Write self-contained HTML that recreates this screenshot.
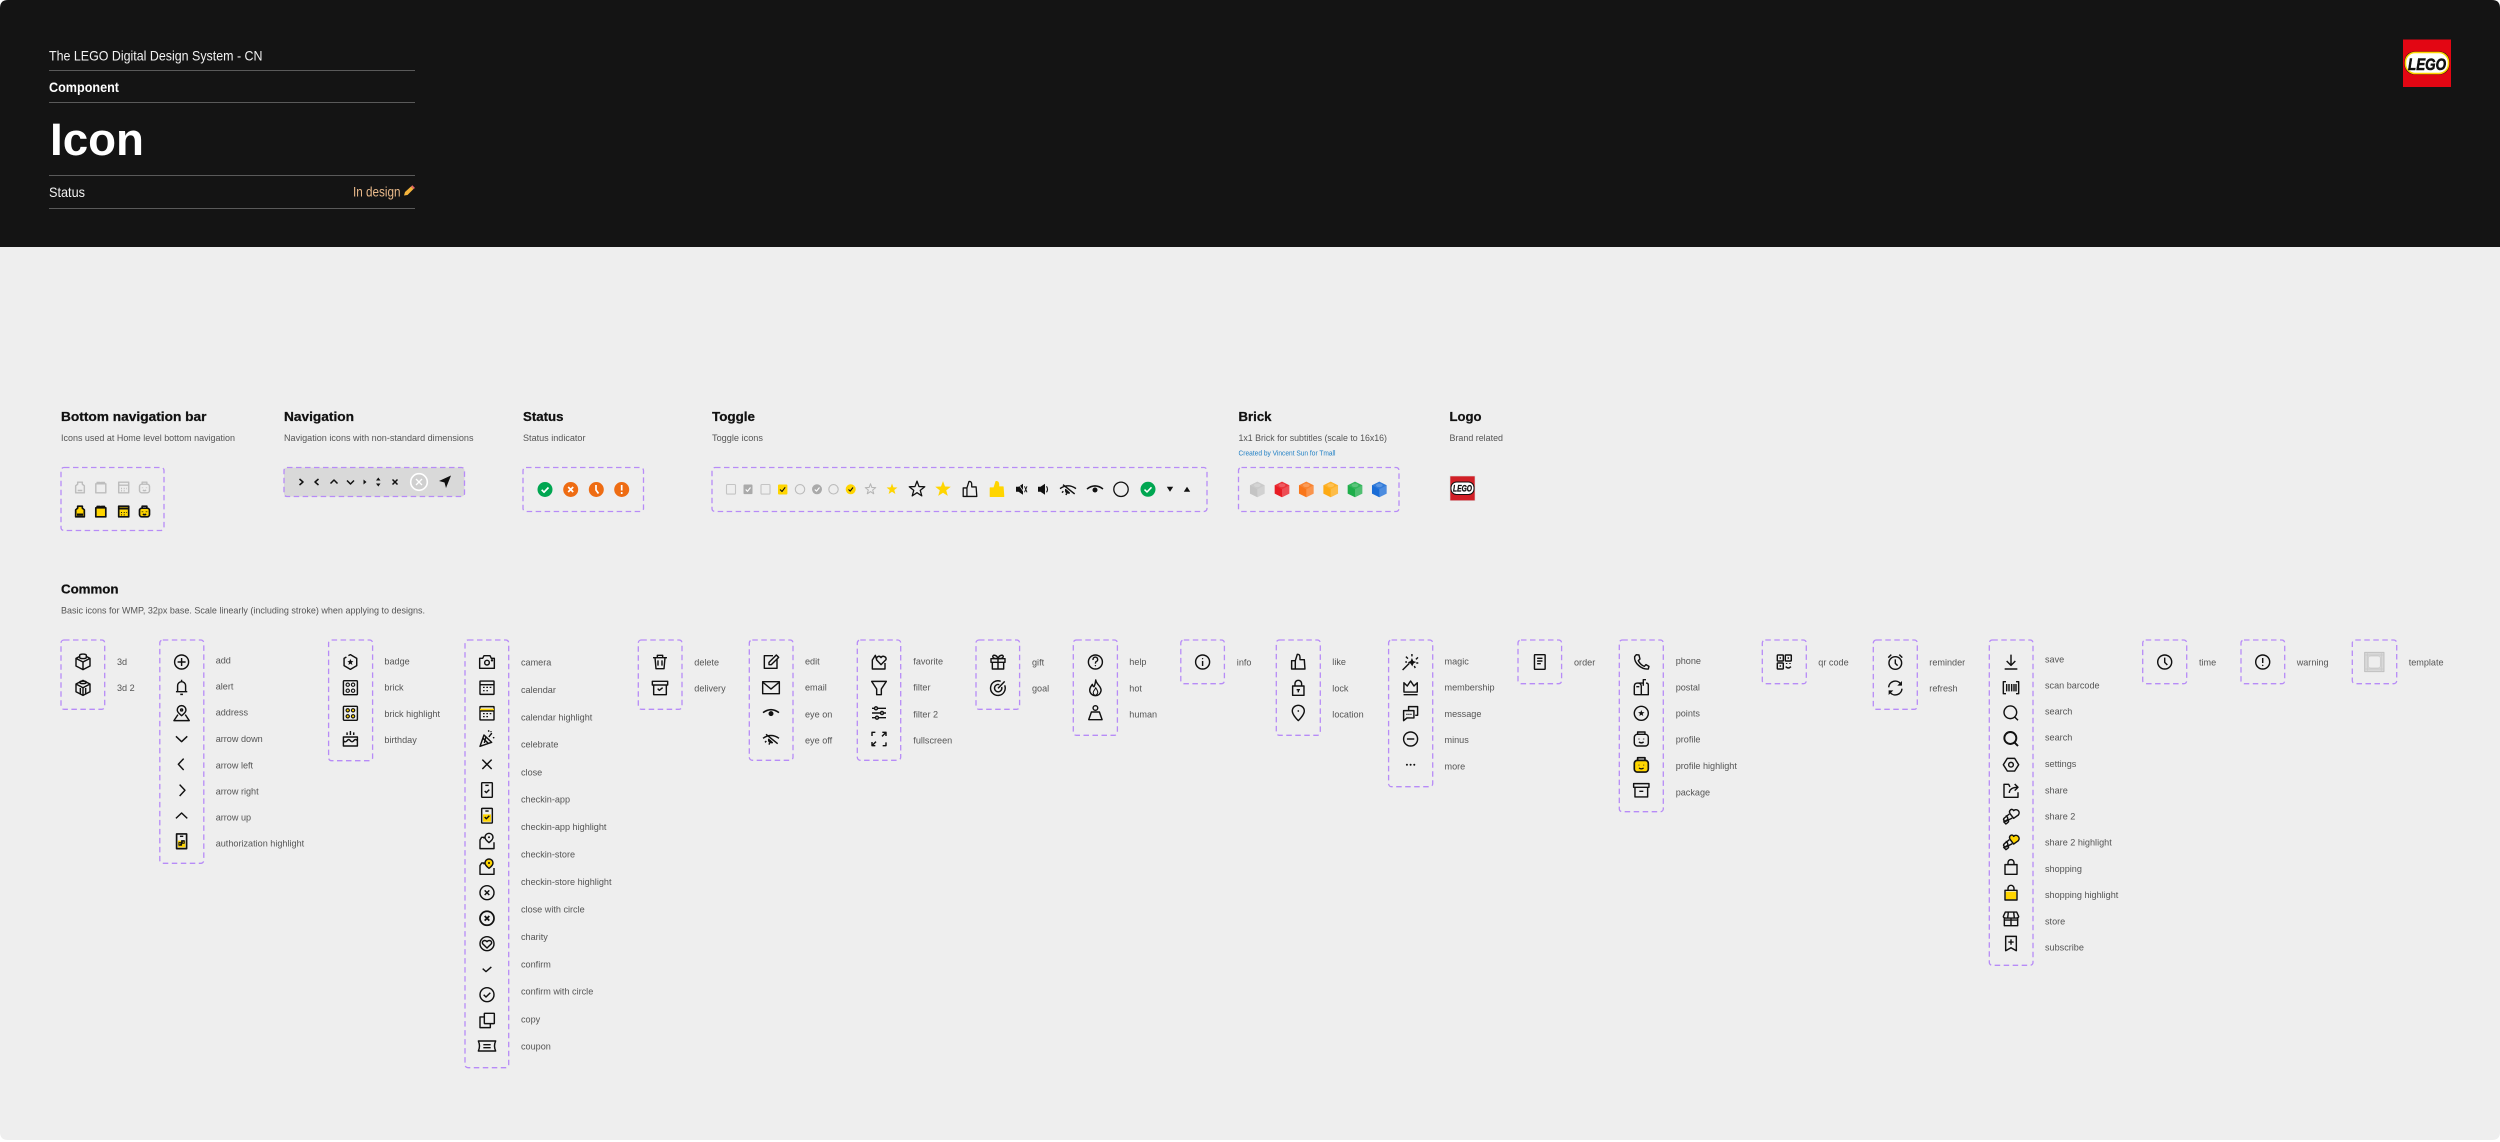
<!DOCTYPE html>
<html><head><meta charset="utf-8"><title>Icon</title>
<style>
html,body{margin:0;padding:0;background:#fff}
svg{display:block;filter:blur(.3px)}
text{font-family:"Liberation Sans","Noto Sans CJK SC",sans-serif}
.t{font-size:13px;font-weight:700;fill:#111;stroke:#111;stroke-width:.25}
.d{font-size:9px;fill:#555}
.l{font-size:9.1px;fill:#555}
.ic{fill:none;stroke:#111;stroke-width:4.3;stroke-linejoin:round}
.b{fill:none;stroke:#b78bf7;stroke-width:1.3;stroke-dasharray:5.5 3.5}
</style></head>
<body>
<svg xmlns="http://www.w3.org/2000/svg" width="2500" height="1142" viewBox="0 0 2500 1142">
<defs>
<polygon id="star" points="0,-24 5.9,-8.1 22.8,-7.4 9.5,3.1 14.1,19.4 0,10 -14.1,19.4 -9.5,3.1 -22.8,-7.4 -5.9,-8.1"/>
<path id="th" d="M-20-4H-9V21H-20ZM-9-4L-3-23Q5-24 5-14V-7H18L20 21H-9"/>
<g id="cube" transform="scale(.3333)"><path d="M0-22L21-11V12L0 23L-21 12V-11ZM-21-11L0 0L21-11M0 0V23"/><path d="M-10-14V-20C-10-25 10-25 10-20V-14C10-9-10-9-10-14Z" fill="#eee"/></g>
<g id="cube2" transform="scale(.3333)"><path d="M0-22L21-11V12L0 23L-21 12V-11ZM-21-11L0 0L21-11M0 0V23M-8 1V20M8 1V20"/><path d="M-10-16C-10-21 10-21 10-16C10-11-10-11-10-16Z"/></g>
<g id="add" transform="scale(.3333)"><circle r="21"/><path d="M0-12V12M-12 0H12"/></g>
<g id="alert" transform="scale(.3333)"><path d="M-12 12V-6A12 12 0 0 1 12-6V12ZM-17 12H17M0-18V-24M-4 20H4"/></g>
<g id="addr" transform="scale(.3333)"><path d="M0-23A13 13 0 0 1 13-10C13-2 0 7 0 7S-13-2-13-10A13 13 0 0 1 0-23Z"/><circle cy="-10" r="3"/><path d="M-11 4L-23 22H23L11 4"/></g>
<g id="dn" transform="scale(.3333)"><path d="M-17-8L0 8L17-8"/></g>
<g id="lf" transform="scale(.3333)"><path d="M8-17L-8 0L8 17"/></g>
<g id="rt" transform="scale(.3333)"><path d="M-8-17L8 0L-8 17"/></g>
<g id="up" transform="scale(.3333)"><path d="M-17 8L0-8L17 8"/></g>
<g id="auth" transform="scale(.3333)"><path d="M-15-22H15V22H-15Z" stroke-width="5"/><path d="M-11-2H11V18H-11Z" fill="#ffd500" stroke="none"/><path d="M-5-15H5"/><path d="M-6 12L6-2M-8 4H0V12H-8ZM0-2H8V6H0Z" stroke-width="3"/></g>
<g id="badge" transform="scale(.3333)"><path d="M-6-19L0-22L19-11V11L0 22L-19 11V-11L-12-15"/><path d="M0-9L3-3L9-2L4 2L6 9L0 5L-6 9L-4 2L-9-2L-3-3Z" fill="#111" stroke="none"/></g>
<g id="brick" transform="scale(.3333)"><rect x="-21" y="-21" width="42" height="42" rx="3"/><g stroke-width="3.4"><circle cx="-8" cy="-9" r="5"/><circle cx="8" cy="-9" r="5"/><circle cx="-8" cy="9" r="5"/><circle cx="8" cy="9" r="5"/></g></g>
<g id="brickh" transform="scale(.3333)"><rect x="-21" y="-21" width="42" height="42" rx="3"/><g stroke-width="3.4" fill="#ffd500"><circle cx="-8" cy="-9" r="5"/><circle cx="8" cy="-9" r="5"/><circle cx="-8" cy="9" r="5"/><circle cx="8" cy="9" r="5"/></g></g>
<g id="bday" transform="scale(.3333)"><path d="M-21-6H21V21H-21ZM-21 5Q-15 12-10 5T0 5T10 5T21 5M0-24V-12M-10-20V-12M10-20V-12"/></g>
<g id="cam" transform="scale(.3333)"><path d="M-22-11H-13L-9-19H9L13-11H22V19H-22Z"/><circle cy="2" r="7"/><circle cx="15" cy="-5" r="1.5" fill="#111"/></g>
<g id="cal" transform="scale(.3333)"><rect x="-21" y="-20" width="42" height="40" rx="1"/><path d="M-21-9H21"/><path d="M-12-1H-7M-2-1H3M8-1H13M-12 9H-7M-2 9H3" stroke-width="3.5"/></g>
<g id="calh" transform="scale(.3333)"><rect x="-21" y="-20" width="42" height="40" rx="1"/><path d="M-21-14H21V-8H-21Z" fill="#ffd500" stroke="none"/><path d="M-21-7H21"/><path d="M-12 1H-7M-2 1H3M8 1H13M-12 10H-7M-2 10H3" stroke-width="3.5"/></g>
<g id="cele" transform="scale(.3333)"><path d="M-21 22L-9-12L14 10ZM-12-2L5 14M-3-8L-8 12"/><path d="M6-6C8-12 12-12 14-18"/><circle cx="5" cy="-24" r="2.5" fill="#111" stroke="none"/><circle cx="20" cy="-4" r="2.5" fill="#111" stroke="none"/><circle cx="12" cy="-22" r="2" fill="#111" stroke="none"/></g>
<g id="x" transform="scale(.3333)"><path d="M-14-14L14 14M14-14L-14 14"/></g>
<g id="capp" transform="scale(.3333)"><rect x="-16" y="-22" width="32" height="44" rx="2"/><path d="M-5-14H5"/><path d="M-7 3L-2 8L7-1"/></g>
<g id="capph" transform="scale(.3333)"><path d="M-12-4H12V18H-12Z" fill="#ffd500" stroke="none"/><rect x="-16" y="-22" width="32" height="44" rx="2"/><path d="M-5-14H5"/><path d="M-7 4L-2 9L7 0"/></g>
<g id="cst" transform="scale(.3333)"><path d="M-9-8V-12H-16L-21-4V22H21V3"/><path d="M6-24A12 12 0 0 1 18-12C18-5 6 4 6 4S-6-5-6-12A12 12 0 0 1 6-24Z" fill="#eee"/><circle cx="6" cy="-12" r="3" fill="#111" stroke="none"/></g>
<g id="csth" transform="scale(.3333)"><path d="M-9-8V-12H-16L-21-4V22H21V3"/><path d="M6-24A12 12 0 0 1 18-12C18-5 6 4 6 4S-6-5-6-12A12 12 0 0 1 6-24Z" fill="#ffd500"/><circle cx="6" cy="-12" r="3" fill="#111" stroke="none"/></g>
<g id="xc" transform="scale(.3333)"><circle r="21"/><path d="M-7-7L7 7M7-7L-7 7"/></g>
<g id="xc2" transform="scale(.3333)" stroke-width="5.2"><circle r="21"/><path d="M-7-7L7 7M7-7L-7 7"/></g>
<g id="char" transform="scale(.3333)"><circle r="21"/><path d="M0 13L-13 0C-17-8-6-13 0-6C6-13 17-8 13 0Z"/></g>
<g id="ok" transform="scale(.3333)"><path d="M-13-2L-3 7L13-7"/></g>
<g id="okc" transform="scale(.3333)"><circle r="21"/><path d="M-10 0L-3 7L10-6"/></g>
<g id="copy" transform="scale(.3333)"><rect x="-8" y="-21" width="30" height="31" rx="1"/><path d="M-8-10H-21V22H10V10"/></g>
<g id="coup" transform="scale(.3333)"><path d="M-26-15H26Q19 0 26 15H-26Q-19 0-26-15ZM-11-4H11M-11 5H11"/></g>
<g id="del" transform="scale(.3333)"><path d="M-21-13H21M-8-13V-20H8V-13M-15-13L-12 20H12L15-13M-6-5V11M6-5V11"/></g>
<g id="deliv" transform="scale(.3333)"><rect x="-23" y="-20" width="46" height="11"/><path d="M-19-9V20H19V-9M-7 2L-2 7L8-1"/></g>
<g id="edit" transform="scale(.3333)"><path d="M6-19H-20V19H18V-8"/><path d="M-6 8V1L16-21L23-14L1 8Z"/></g>
<g id="mail" transform="scale(.3333)"><rect x="-25" y="-18" width="50" height="36"/><path d="M-24-16L0 4L24-16"/></g>
<g id="eye" transform="scale(.3333)"><path d="M-24-1Q0-19 24-1" stroke-width="4.6"/><circle cy="2" r="7.500" fill="#111" stroke="none"/></g>
<g id="eyeo" transform="scale(.3333)"><path d="M-24-2Q0-19 24-2M-15-14L20 14" stroke-width="4.3"/><path d="M-7 1L4 11Q-8 12-7 1Z" fill="#111"/><path d="M-14 6L-18 10M-4 12L-6 17"/></g>
<g id="fav" transform="scale(.3333)"><path d="M-8-10L-11-20L-20-6V21H18V3"/><path d="M6 8L-7-6C-10-16 1-21 6-13C11-21 23-16 21-7Z" fill="#eee"/></g>
<g id="filt" transform="scale(.3333)"><path d="M-22-19H22L7 4V21H-7V4Z"/></g>
<g id="filt2" transform="scale(.3333)"><path d="M-21-14H21M-21 0H21M-21 14H21"/><circle cx="-9" cy="-14" r="4.500" fill="#eee"/><circle cx="9" cy="0" r="4.500" fill="#eee"/><circle cx="-6" cy="14" r="4.500" fill="#eee"/></g>
<g id="fs" transform="scale(.3333)"><path d="M-21-9V-20H-11M10-20H21V-9M21-20L9-8M-21 9V20H-11M-21 20L-9 8M21 10V20H11"/></g>
<g id="gift" transform="scale(.3333)"><path d="M-21-10H21V1H-21ZM-17 1V21H17V1ZM0-10V21"/><path d="M0-10C-4-23-19-23-15-14C-13-10-5-10 0-10C5-10 13-10 15-14C19-23 4-23 0-10Z"/></g>
<g id="goal" transform="scale(.3333)"><path d="M8-20A22 22 0 1 0 20-8M4-10A11 11 0 1 0 11-3M0 1L20-20"/></g>
<g id="help" transform="scale(.3333)"><circle r="21"/><path d="M-7-6A7 7 0 1 1 2-1Q0 1 0 5"/><circle cy="11" r="2" fill="#111" stroke="none"/></g>
<g id="hot" transform="scale(.3333)"><path d="M1-24C3-10 18-6 17 8C15 19 7 23 0 23C-8 23-17 17-17 6C-17-2-13-5-9-11C-8-6-6-4-4-4C-1-10 0-16 1-24Z"/><path d="M0 22C-6 21-8 14-5 9C-3 6 0 3 1-1C3 4 8 8 7 14C6 18 3 21 0 22" stroke-width="3"/></g>
<g id="hum" transform="scale(.3333)"><circle cy="-15" r="7"/><path d="M-12-3H12L20 20H-20Z"/></g>
<g id="info" transform="scale(.3333)"><circle r="21"/><path d="M0-3V12"/><circle cy="-10" r="2" fill="#111" stroke="none"/></g>
<g id="like" transform="scale(.3333)"><use href="#th"/></g>
<g id="lock" transform="scale(.3333)"><rect x="-17" y="-6" width="34" height="28"/><path d="M-10-6V-13A10 10 0 0 1 10-13V-6M-5 5H5M0 5V13"/></g>
<g id="loc" transform="scale(.3333)"><path d="M0-23C10-23 18-16 18-6C18 6 0 23 0 23S-18 6-18-6C-18-16-10-23 0-23Z"/><circle cy="-6" r="2.600" fill="#111" stroke="none"/></g>
<g id="magic" transform="scale(.3333)"><path d="M-24 24L-4 4"/><path d="M4-12L8-3L17 0L9 4L5 13L0 5L-9 1L0-3Z" fill="#111" stroke="none"/><path d="M4-24V-17M-14-16L-8-10M22-14L16-8M23 3H17M-16 0H-11M14 18L11 12"/></g>
<g id="crown" transform="scale(.3333)"><path d="M-20-15L-10-5L0-20L10-5L20-15V13H-20ZM-21 21H21"/></g>
<g id="msg" transform="scale(.3333)"><path d="M-6-9V-20H21V6H14"/><path d="M-21-8H10V14H-11L-21 22Z"/><path d="M-13 3H-9M-7 3H-3M-1 3H3" stroke-width="3.5"/></g>
<g id="minus" transform="scale(.3333)"><circle r="21"/><path d="M-11 0H11"/></g>
<g id="more" transform="scale(.3333)"><circle cx="-11" r="3" fill="#111" stroke="none"/><circle r="3" fill="#111" stroke="none"/><circle cx="11" r="3" fill="#111" stroke="none"/></g>
<g id="order" transform="scale(.3333)"><rect x="-16" y="-22" width="32" height="44" rx="1.500"/><path d="M-8-11H8M-8-3H8M-8 5H3"/></g>
<g id="phone" transform="scale(.3333)"><path d="M-15-22L-7-21L-4-9L-9-4C-5 4 1 10 9 13L14 8L23 13L21 21C0 23-22 3-20-16Z"/></g>
<g id="post" transform="scale(.3333)"><path d="M-21 21V-4Q-21-14-11-14H6M-21 21H21V-8Q21-14 14-14M0 21V-4Q0-14-11-14M-15-3H-6M6-6V-24H14"/></g>
<g id="pts" transform="scale(.3333)"><circle r="21"/><g transform="scale(.42)"><use href="#star" fill="#111" stroke="none"/></g></g>
<g id="prof" transform="scale(.3333)"><rect x="-21" y="-14" width="42" height="35" rx="9"/><path d="M-11-14V-21H11V-14"/><path d="M-7-1V1M7-1V1M-7 9Q0 14 7 9"/></g>
<g id="profh" transform="scale(.3333)" stroke-width="5"><rect x="-21" y="-13" width="42" height="35" rx="9" fill="#ffd500"/><path d="M-11-13V-21H11V-13"/><path d="M-7 0V2M7 0V2M-7 10Q0 15 7 10" stroke-width="3.500"/></g>
<g id="pack" transform="scale(.3333)"><rect x="-23" y="-20" width="46" height="11"/><path d="M-19-9V20H19V-9M-6 3H6"/></g>
<g id="qr" transform="scale(.3333)"><rect x="-21" y="-21" width="18" height="18" rx="2"/><rect x="3" y="-21" width="18" height="18" rx="2"/><rect x="-21" y="3" width="18" height="18" rx="2"/><path d="M-12-12H-12.1M12-12H11.9M-12 12H-12.1" stroke-width="5" stroke-linecap="round"/><path d="M7 3V6M17 3V6M4 14Q12 22 20 14"/></g>
<g id="remind" transform="scale(.3333)"><circle cy="3" r="19"/><path d="M0-8V4L7 11M-21-13L-12-22M21-13L12-22"/></g>
<g id="ref" transform="scale(.3333)"><path d="M-20-2A20 20 0 0 1 15-14M20 2A20 20 0 0 1-15 14"/><path d="M20-21V-7H6ZM-20 21V7H-6Z" fill="#111" stroke="none"/></g>
<g id="save" transform="scale(.3333)"><path d="M0-22V10M-13-3L0 10L13-3M-19 21H19"/></g>
<g id="scan" transform="scale(.3333)"><path d="M-15-18H-23V18H-15M15-18H23V18H15M-13-11V11M-6-11V11M2-11V11M9-11V11M15-11V11"/></g>
<g id="srch" transform="scale(.3333)"><circle cx="-2" cy="-3" r="19"/><path d="M11 11L21 21"/></g>
<g id="srch2" transform="scale(.3333)" stroke-width="5.800"><circle cx="-2" cy="-3" r="18"/><path d="M11 11L21 21"/></g>
<g id="set" transform="scale(.3333)"><path d="M-23 0L-11-19H11L23 0L11 19H-11Z"/><circle r="7"/></g>
<g id="share" transform="scale(.3333)"><path d="M-21 0V21H21V6M-21 0V-18H-7L-3-10M-5 8C-5-3 5-9 19-9M11-19L21-9L11 1"/></g>
<g id="sh2" transform="scale(.3333)"><path d="M8 7L-3-7C-8-17 3-25 8-16C16-24 30-14 22-3Z"/><path d="M-5-6L-20 6C-26 12-18 18-14 15L4 6M-16-1C-12 0-8 6-10 11L-22 18M-10 11C-7 13-6 17-9 19L-15 24M-23 16L-14 25"/></g>
<g id="sh2h" transform="scale(.3333)"><path d="M8 7L-3-7C-8-17 3-25 8-16C16-24 30-14 22-3Z" fill="#ffd500"/><path d="M-5-6L-20 6C-26 12-18 18-14 15L4 6M-16-1C-12 0-8 6-10 11L-22 18M-10 11C-7 13-6 17-9 19L-15 24M-23 16L-14 25"/></g>
<g id="shop" transform="scale(.3333)"><path d="M-18-8H18V21H-18ZM-9-8V-14A9 9 0 0 1 9-14V-8"/></g>
<g id="shoph" transform="scale(.3333)"><path d="M-16-4H16V19H-16Z" fill="#ffd500" stroke="none"/><path d="M-18-8H18V21H-18ZM-9-8V-14A9 9 0 0 1 9-14V-8"/></g>
<g id="store" transform="scale(.3333)"><path d="M-17-20H17L23-7Q23-2 15-2H-15Q-23-2-23-7ZM-20-2V21H20V-2M0-2V21M-8-20L-10-2M8-20L10-2M-20 4H20"/></g>
<g id="sub" transform="scale(.3333)"><path d="M-16-22H16V21L0 12L-16 21ZM0-13V3M-8-5H8"/></g>
<g id="time" transform="scale(.3333)"><circle r="21"/><path d="M0-13V1L8 9"/></g>
<g id="warn" transform="scale(.3333)"><circle r="21"/><path d="M0-12V3"/><circle cy="10" r="2.300" fill="#111" stroke="none"/></g>
<g id="tpl" transform="scale(.3333)"><rect x="-29" y="-29" width="58" height="58" fill="#d8d8d8" stroke="#c0c0c0" stroke-width="3"/><path d="M-29-21H29M-29 21H29M-21-29V29M21-29V29" stroke="#c8c8c8" stroke-width="2"/><rect x="-18" y="-18" width="36" height="36" rx="7" fill="#eee" stroke="#c8c8c8" stroke-width="2"/></g>
<g id="br" transform="scale(.3333)"><path d="M0-23L22-12V13L0 24L-22 13V-12Z" fill="currentColor" stroke="none"/><path d="M0 0L22-12V13L0 24Z" fill="#fff" fill-opacity=".22" stroke="none"/><path d="M0 0L-22-12L0-23L22-12Z" fill="#fff" fill-opacity=".1" stroke="none"/><ellipse cy="-12" rx="10" ry="5.500" fill="#fff" fill-opacity=".2" stroke="none"/></g>
<g id="n1" transform="scale(.3333)"><path d="M-13 16V-5L-7-10V-16H7V-10L13-5V16ZM-7 9H7"/></g>
<g id="n2" transform="scale(.3333)"><path d="M-15-11H15V16H-15ZM-11-11V-15H-2V-11M2-11V-15H11V-11"/></g>
<g id="n3" transform="scale(.3333)"><path d="M-15-16H15V16H-15ZM-15-7H15M-8 3H-5M0 3H3M8 3H10M-8 10H-5M0 10H3"/></g>
<g id="n4" transform="scale(.3333)"><rect x="-15" y="-10" width="30" height="26" rx="7"/><path d="M-7-10V-16H7V-10M-6 0V2M6 0V2M-5 8Q0 11 5 8"/></g>
<g id="m1" transform="scale(.3333)" stroke-width="5"><path d="M-13 16V-5L-7-10V-16H7V-10L13-5V16Z" fill="#ffd500"/><path d="M-9 6H9V13H-9Z" fill="#111" stroke="none"/></g>
<g id="m2" transform="scale(.3333)" stroke-width="5"><path d="M-15-11H15V16H-15Z" fill="#ffd500"/><path d="M-11-11V-15H-2V-11M2-11V-15H11V-11"/></g>
<g id="m3" transform="scale(.3333)" stroke-width="5"><path d="M-15-16H15V16H-15Z" fill="#ffd500"/><path d="M-15-12H15V-6H-15Z" fill="#111" stroke="none"/><path d="M-8 3H-5M0 3H3M8 3H10M-8 10H-5M0 10H3" stroke-width="3"/></g>
<g id="m4" transform="scale(.3333)" stroke-width="5"><rect x="-15" y="-10" width="30" height="26" rx="7" fill="#ffd500"/><path d="M-7-10V-16H7V-10M-6 0V2M6 0V2M-5 8Q0 11 5 8"/></g>
</defs>

<rect width="2500" height="1142" fill="#fff"/>
<path d="M0 8Q0 0 8 0H2492Q2500 0 2500 8V1132Q2500 1140 2492 1140H8Q0 1140 0 1132Z" fill="#eee"/>
<path d="M0 247V8Q0 0 8 0H2492Q2500 0 2500 8V247Z" fill="#141414"/>

<!-- header -->
<path d="M49 70.500H415M49 102.500H415M49 175.500H415M49 208.500H415" stroke="#5a5a5a" stroke-width="1" fill="none"/>
<text x="49" y="60.500" font-size="14" fill="#f2f2f2" textLength="213.500" lengthAdjust="spacingAndGlyphs">The LEGO Digital Design System - CN</text>
<text x="49" y="92" font-size="13.500" font-weight="700" fill="#fff" textLength="70" lengthAdjust="spacingAndGlyphs">Component</text>
<text x="50" y="155" font-size="45" font-weight="700" fill="#fff" textLength="94" lengthAdjust="spacingAndGlyphs">Icon</text>
<text x="49" y="197" font-size="14" fill="#f2f2f2" textLength="36" lengthAdjust="spacingAndGlyphs">Status</text>
<text x="353" y="196.500" font-size="14" fill="#e8b98a" textLength="47.500" lengthAdjust="spacingAndGlyphs">In design</text>
<path d="M405 192L411 186.500L413.500 189L407.500 195L404 195.500Z" fill="#f4b43c"/><path d="M411 186.500L412.300 185.300L415 188L413.500 189Z" fill="#e86a6a"/>

<!-- logo -->
<rect x="2403" y="39.500" width="48" height="47.500" fill="#e30613"/>
<rect x="2404.500" y="51.500" width="45" height="23" rx="10" fill="#111"/>
<rect x="2405.500" y="52.500" width="43" height="21" rx="9.500" fill="#fff" stroke="#ffd500" stroke-width="1.500"/>
<text x="2408" y="70" font-size="17" font-weight="700" font-style="italic" fill="#111" stroke="#111" stroke-width=".6" textLength="38" lengthAdjust="spacingAndGlyphs">LEGO</text>

<!-- section titles -->
<text class="t" x="61" y="421" textLength="145.500" lengthAdjust="spacingAndGlyphs">Bottom navigation bar</text>
<text class="d" x="61" y="441" textLength="174" lengthAdjust="spacingAndGlyphs">Icons used at Home level bottom navigation</text>
<text class="t" x="284" y="421" textLength="70" lengthAdjust="spacingAndGlyphs">Navigation</text>
<text class="d" x="284" y="441" textLength="189.500" lengthAdjust="spacingAndGlyphs">Navigation icons with non-standard dimensions</text>
<text class="t" x="523" y="421" textLength="40.500" lengthAdjust="spacingAndGlyphs">Status</text>
<text class="d" x="523" y="441" textLength="62.500" lengthAdjust="spacingAndGlyphs">Status indicator</text>
<text class="t" x="712" y="421" textLength="43" lengthAdjust="spacingAndGlyphs">Toggle</text>
<text class="d" x="712" y="441" textLength="51" lengthAdjust="spacingAndGlyphs">Toggle icons</text>
<text class="t" x="1238.500" y="421" textLength="33" lengthAdjust="spacingAndGlyphs">Brick</text>
<text class="d" x="1238.500" y="441" textLength="148.500" lengthAdjust="spacingAndGlyphs">1x1 Brick for subtitles (scale to 16x16)</text>
<text x="1238.500" y="455.500" font-size="7" fill="#1f7fc4" textLength="97" lengthAdjust="spacingAndGlyphs">Created by Vincent Sun for Tmall</text>
<text class="t" x="1449.500" y="421" textLength="32" lengthAdjust="spacingAndGlyphs">Logo</text>
<text class="d" x="1449.500" y="441" textLength="53.500" lengthAdjust="spacingAndGlyphs">Brand related</text>
<text class="t" x="61" y="593.500" textLength="57.500" lengthAdjust="spacingAndGlyphs">Common</text>
<text class="d" x="61" y="613.500" textLength="364" lengthAdjust="spacingAndGlyphs">Basic icons for WMP, 32px base. Scale linearly (including stroke) when applying to designs.</text>

<!-- dashed boxes -->
<rect x="284" y="467.500" width="180.500" height="29" rx="3" fill="#d9d9d9"/>
<g class="b">
<rect x="61" y="467.500" width="103" height="63" rx="3"/>
<rect x="284" y="467.500" width="180.500" height="29" rx="3"/>
<rect x="523" y="467.500" width="120.500" height="44" rx="3"/>
<rect x="712" y="467.500" width="495" height="44" rx="3"/>
<rect x="1238.500" y="467.500" width="160.500" height="44" rx="3"/>
<rect x="61" y="640" width="43.700" height="69.300" rx="3"/>
<rect x="159.800" y="640" width="44" height="223.300" rx="3"/>
<rect x="328.600" y="640" width="44" height="120.700" rx="3"/>
<rect x="465" y="640" width="43.700" height="427.700" rx="3"/>
<rect x="638.300" y="640" width="43.700" height="69.300" rx="3"/>
<rect x="749.300" y="640" width="43.700" height="120.300" rx="3"/>
<rect x="857.300" y="640" width="43.400" height="120.300" rx="3"/>
<rect x="976" y="640" width="43.600" height="69.300" rx="3"/>
<rect x="1073.300" y="640" width="44.100" height="95.300" rx="3"/>
<rect x="1180.800" y="640" width="43.600" height="43.700" rx="3"/>
<rect x="1276.300" y="640" width="44" height="95.300" rx="3"/>
<rect x="1388.600" y="640" width="44.100" height="146.700" rx="3"/>
<rect x="1518" y="640" width="43.600" height="43.700" rx="3"/>
<rect x="1619.300" y="640" width="44" height="171.700" rx="3"/>
<rect x="1762.300" y="640" width="44" height="43.700" rx="3"/>
<rect x="1873.300" y="640" width="44" height="69.300" rx="3"/>
<rect x="1989.300" y="640" width="43.700" height="325.300" rx="3"/>
<rect x="2142.700" y="640" width="44" height="43.700" rx="3"/>
<rect x="2241" y="640" width="43.700" height="43.700" rx="3"/>
<rect x="2352.300" y="640" width="44.400" height="43.700" rx="3"/>
</g>

<g class="ic">
<!-- bottom nav -->
<g style="stroke:#bdbdbd">
<use href="#n1" x="80" y="487.500"/><use href="#n2" x="100.800" y="487.500"/><use href="#n3" x="123.700" y="487.500"/><use href="#n4" x="144.500" y="487.500"/>
</g>
<use href="#m1" x="80" y="511.500"/><use href="#m2" x="100.800" y="511.500"/><use href="#m3" x="123.700" y="511.500"/><use href="#m4" x="144.500" y="511.500"/>

<!-- navigation -->
<g stroke-width="1.500" transform="translate(0 482)">
<path d="M299.500-3L303 0L299.500 3"/><path d="M318.500-3L315 0L318.500 3"/><path d="M330.500 1.500L334-2L337.500 1.500"/><path d="M347-1.500L350.500 2L354-1.500"/>
<path d="M363.500-2.500L366.500 0L363.500 2.500Z" fill="#111" stroke="none"/>
<path d="M376-1.500H380.500L378.300-4.500ZM376 1.500H380.500L378.300 4.500Z" fill="#111" stroke="none"/>
<path d="M392.500-2.500L397.500 2.500M397.500-2.500L392.500 2.500"/>
<circle cx="419" r="8.300" stroke="#fff" stroke-width="1.600" fill="#cfcfcf"/><path d="M416-3L422 3M422-3L416 3" stroke="#fff" stroke-width="1.300"/>
<path d="M451-6.500L439-1L444.500 .5L446 6Z" fill="#111" stroke="none"/>
</g>

<!-- status -->
<g transform="translate(0 489.500)" stroke="#fff" stroke-width="1.700">
<circle cx="545" r="7.500" fill="#00a651" stroke="none"/><path d="M541.700 .3L544 2.700L548.500-2"/>
<circle cx="570.700" r="7.500" fill="#ee6c13" stroke="none"/><path d="M568.200-2.500L573.200 2.500M573.200-2.500L568.200 2.500"/>
<circle cx="596.300" r="7.500" fill="#ee6c13" stroke="none"/><path d="M596-4.500V.5L598.500 4"/>
<circle cx="621.700" r="7.500" fill="#ee6c13" stroke="none"/><path d="M621.700-4.500V1M621.700 2.500V4.500"/>
</g>

<!-- toggle -->
<g transform="translate(0 489.300)" stroke-width="1.100">
<rect x="726.500" y="-4.800" width="9" height="9.600" rx="1" stroke="#c4c4c4"/>
<rect x="743.500" y="-4.800" width="9" height="9.600" rx="1" fill="#aaa" stroke="none"/><path d="M745.700 .2L747.500 2L750.500-1.800" stroke="#fff"/>
<rect x="761" y="-4.800" width="9" height="9.600" rx="1" stroke="#c4c4c4"/>
<rect x="778" y="-4.800" width="9.400" height="10" rx="1" fill="#ffd500" stroke="none"/><path d="M780 .2L782 2.200L785.200-2" stroke="#111"/>
<circle cx="800" r="4.700" stroke="#bbb"/>
<circle cx="817" r="5" fill="#aaa" stroke="none"/><path d="M814.800 .2L816.500 1.800L819.500-1.800" stroke="#fff"/>
<circle cx="833.500" r="4.700" stroke="#bbb"/>
<circle cx="850.700" r="5" fill="#ffd500" stroke="none"/><path d="M848.500 .2L850.200 1.800L853-1.800" stroke="#111"/>
<use href="#star" transform="translate(870.500 0) scale(.23)" stroke="#b5b5b5" stroke-width="4.500"/>
<use href="#star" transform="translate(892 0) scale(.24)" fill="#ffd500" stroke="none"/>
<use href="#star" transform="translate(917 0) scale(.34)" stroke-width="3.800"/>
<use href="#star" transform="translate(943 0) scale(.34)" fill="#ffd500" stroke="none"/>
<use href="#th" transform="translate(970 0) scale(.34)" stroke-width="3.800"/>
<use href="#th" transform="translate(997 0) scale(.34)" fill="#ffd500" stroke="#ffd500" stroke-width="3"/>
<path d="M1018.500-2.500H1016V2.500H1018.500L1023 5.500V-5.500Z" fill="#111" stroke="none"/><path d="M1024.500-3L1027 3M1027-3L1024.500 3" stroke-width=".9"/><path d="M1018-6L1026 6" stroke="#eee" stroke-width=".8"/>
<path d="M1040.500-2.500H1038V2.500H1040.500L1045 5.500V-5.500Z" fill="#111" stroke="none"/><path d="M1046.500-3Q1048.500 0 1046.500 3"/>
<use href="#eyeo" x="1068" y="0" stroke-width="4.300"/>
<use href="#eye" x="1095" y="0" stroke-width="4.300"/>
<circle cx="1121" r="7.200" stroke-width="1.300"/>
<circle cx="1148" r="7.500" fill="#00a651" stroke="none"/><path d="M1144.500 .3L1147 2.700L1151.500-2" stroke="#fff" stroke-width="1.500"/>
<path d="M1166.800-2.500H1173.200L1170 2.500Z" fill="#111" stroke="none"/>
<path d="M1183.800 2.500H1190.200L1187-2.500Z" fill="#111" stroke="none"/>
</g>

<!-- bricks -->
<use href="#br" x="1257.300" y="489.300" color="#c4c4c4"/>
<use href="#br" x="1282" y="489.300" color="#e81c24"/>
<use href="#br" x="1306.300" y="489.300" color="#f9761a"/>
<use href="#br" x="1330.700" y="489.300" color="#fdaa14"/>
<use href="#br" x="1355" y="489.300" color="#1eae4a"/>
<use href="#br" x="1379.300" y="489.300" color="#1a6cd6"/>

<!-- common -->
<use href="#cube" x="83" y="662"/><use href="#cube2" x="83" y="687.700"/>

<use href="#add" x="181.600" y="662"/><use href="#alert" x="181.600" y="687.700"/><use href="#addr" x="181.600" y="713.300"/><use href="#dn" x="181.600" y="739"/><use href="#lf" x="181" y="764.300"/><use href="#rt" x="182.300" y="790.300"/><use href="#up" x="181.600" y="815.700"/><use href="#auth" x="181.600" y="841.300"/>

<use href="#badge" x="350.400" y="662"/><use href="#brick" x="350.400" y="687.700"/><use href="#brickh" x="350.400" y="713.300"/><use href="#bday" x="350.400" y="739"/>

<use href="#cam" x="487" y="662"/><use href="#cal" x="487" y="687.700"/><use href="#calh" x="487" y="713.300"/><use href="#cele" x="487" y="739"/><use href="#x" x="487" y="764.300"/><use href="#capp" x="487" y="790"/><use href="#capph" x="487" y="815.700"/><use href="#cst" x="487" y="841.300"/><use href="#csth" x="487" y="867"/><use href="#xc" x="487" y="892.700"/><use href="#xc2" x="487" y="918.300"/><use href="#char" x="487" y="943.700"/><use href="#ok" x="487" y="969.300"/><use href="#okc" x="487" y="994.700"/><use href="#copy" x="487" y="1020.300"/><use href="#coup" x="487" y="1046"/>

<use href="#del" x="660" y="662"/><use href="#deliv" x="660" y="688"/>

<use href="#edit" x="771" y="662"/><use href="#mail" x="771" y="687.700"/><use href="#eye" x="771" y="713"/><use href="#eyeo" x="771" y="739"/>

<use href="#fav" x="879" y="662"/><use href="#filt" x="879" y="687.700"/><use href="#filt2" x="879" y="713"/><use href="#fs" x="879" y="739"/>

<use href="#gift" x="998" y="662"/><use href="#goal" x="998" y="688"/>

<use href="#help" x="1095.400" y="662"/><use href="#hot" x="1095.400" y="688"/><use href="#hum" x="1095.400" y="713"/>

<use href="#info" x="1202.600" y="662"/>

<use href="#like" x="1298.300" y="662"/><use href="#lock" x="1298.300" y="688"/><use href="#loc" x="1298.300" y="713"/>

<use href="#magic" x="1410.600" y="662"/><use href="#crown" x="1410.600" y="687.700"/><use href="#msg" x="1410.600" y="713.300"/><use href="#minus" x="1410.600" y="739"/><use href="#more" x="1410.600" y="764.700"/>

<use href="#order" x="1539.800" y="662"/>

<use href="#phone" x="1641.300" y="662"/><use href="#post" x="1641.300" y="687.700"/><use href="#pts" x="1641.300" y="713.300"/><use href="#prof" x="1641.300" y="739"/><use href="#profh" x="1641.300" y="764.700"/><use href="#pack" x="1641.300" y="790.300"/>

<use href="#qr" x="1784.300" y="662"/>

<use href="#remind" x="1895.300" y="662"/><use href="#ref" x="1895.300" y="688"/>

<use href="#save" x="2011" y="662"/><use href="#scan" x="2011" y="687.700"/><use href="#srch" x="2011" y="713.300"/><use href="#srch2" x="2011" y="739"/><use href="#set" x="2011" y="764.700"/><use href="#share" x="2011" y="790.300"/><use href="#sh2" x="2011" y="816"/><use href="#sh2h" x="2011" y="841.700"/><use href="#shop" x="2011" y="867.300"/><use href="#shoph" x="2011" y="893"/><use href="#store" x="2011" y="918.700"/><use href="#sub" x="2011" y="943.700"/>

<use href="#time" x="2164.700" y="662"/><use href="#warn" x="2262.700" y="662"/><use href="#tpl" x="2374.300" y="662"/>
</g>

<!-- small logo -->
<rect x="1450" y="476" width="25" height="24.700" fill="#d11f26" stroke="#ddd" stroke-width=".6"/>
<rect x="1451" y="482" width="23" height="12.500" rx="5.500" fill="#fff" stroke="#111" stroke-width="1"/>
<text x="1453" y="491.500" font-size="9" font-weight="700" font-style="italic" fill="#111" stroke="#111" stroke-width=".3" textLength="19" lengthAdjust="spacingAndGlyphs">LEGO</text>

<!-- labels -->
<g>
<text class="l" x="117" y="665">3d</text><text class="l" x="117" y="691">3d 2</text>
<text class="l" x="215.700" y="663.300">add</text><text class="l" x="215.700" y="689.700">alert</text><text class="l" x="215.700" y="715.700">address</text><text class="l" x="215.700" y="742">arrow down</text><text class="l" x="215.700" y="768.300">arrow left</text><text class="l" x="215.700" y="794.700">arrow right</text><text class="l" x="215.700" y="820.700">arrow up</text><text class="l" x="215.700" y="846.700">authorization highlight</text>
<text class="l" x="384.400" y="664.700">badge</text><text class="l" x="384.400" y="690.700">brick</text><text class="l" x="384.400" y="717">brick highlight</text><text class="l" x="384.400" y="743">birthday</text>
<text class="l" x="521" y="665.700">camera</text><text class="l" x="521" y="693">calendar</text><text class="l" x="521" y="720.300">calendar highlight</text><text class="l" x="521" y="747.700">celebrate</text><text class="l" x="521" y="775.300">close</text><text class="l" x="521" y="802.700">checkin-app</text><text class="l" x="521" y="830">checkin-app highlight</text><text class="l" x="521" y="857.700">checkin-store</text><text class="l" x="521" y="885">checkin-store highlight</text><text class="l" x="521" y="912.300">close with circle</text><text class="l" x="521" y="940">charity</text><text class="l" x="521" y="967.300">confirm</text><text class="l" x="521" y="994.700">confirm with circle</text><text class="l" x="521" y="1022.300">copy</text><text class="l" x="521" y="1049.700">coupon</text>
<text class="l" x="694.300" y="665.300">delete</text><text class="l" x="694.300" y="691.300">delivery</text>
<text class="l" x="805" y="664.700">edit</text><text class="l" x="805" y="690.700">email</text><text class="l" x="805" y="717.300">eye on</text><text class="l" x="805" y="743.300">eye off</text>
<text class="l" x="913.300" y="664.700">favorite</text><text class="l" x="913.300" y="690.700">filter</text><text class="l" x="913.300" y="717.300">filter 2</text><text class="l" x="913.300" y="743.300">fullscreen</text>
<text class="l" x="1032" y="665.300">gift</text><text class="l" x="1032" y="691.700">goal</text>
<text class="l" x="1129.300" y="665">help</text><text class="l" x="1129.300" y="691.300">hot</text><text class="l" x="1129.300" y="717.300">human</text>
<text class="l" x="1236.800" y="665.700">info</text>
<text class="l" x="1332.300" y="665">like</text><text class="l" x="1332.300" y="691.300">lock</text><text class="l" x="1332.300" y="717.300">location</text>
<text class="l" x="1444.500" y="664.300">magic</text><text class="l" x="1444.500" y="690.700">membership</text><text class="l" x="1444.500" y="717">message</text><text class="l" x="1444.500" y="743">minus</text><text class="l" x="1444.500" y="769.300">more</text>
<text class="l" x="1574" y="665.700">order</text>
<text class="l" x="1675.700" y="664">phone</text><text class="l" x="1675.700" y="690.300">postal</text><text class="l" x="1675.700" y="716.700">points</text><text class="l" x="1675.700" y="742.700">profile</text><text class="l" x="1675.700" y="769">profile highlight</text><text class="l" x="1675.700" y="795.300">package</text>
<text class="l" x="1818.300" y="665.700">qr code</text>
<text class="l" x="1929.300" y="665.300">reminder</text><text class="l" x="1929.300" y="691.700">refresh</text>
<text class="l" x="2045" y="662.300">save</text><text class="l" x="2045" y="688.300">scan barcode</text><text class="l" x="2045" y="714.700">search</text><text class="l" x="2045" y="740.700">search</text><text class="l" x="2045" y="767">settings</text><text class="l" x="2045" y="793.300">share</text><text class="l" x="2045" y="819.700">share 2</text><text class="l" x="2045" y="845.700">share 2 highlight</text><text class="l" x="2045" y="872">shopping</text><text class="l" x="2045" y="898">shopping highlight</text><text class="l" x="2045" y="924.300">store</text><text class="l" x="2045" y="950.700">subscribe</text>
<text class="l" x="2199" y="665.700">time</text><text class="l" x="2296.700" y="665.700">warning</text><text class="l" x="2408.700" y="665.700">template</text>
</g>
</svg>
</body></html>
